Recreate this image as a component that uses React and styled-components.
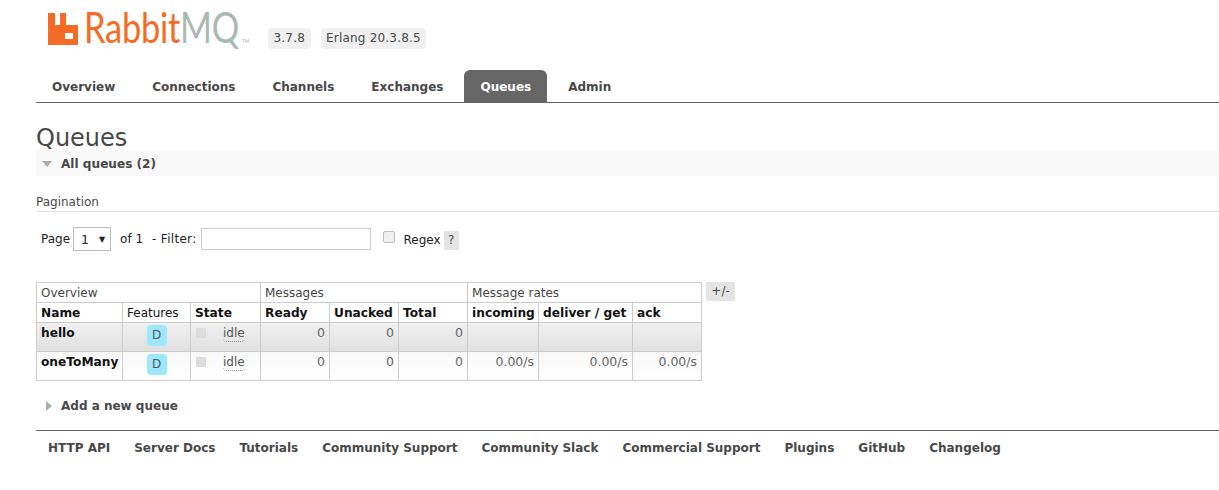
import styled, { createGlobalStyle } from "styled-components";

const GlobalStyle = createGlobalStyle`
  html, body {
    margin: 0;
    padding: 0;
    background: #fff;
    color: #484848;
    font-family: "DejaVu Sans", Verdana, sans-serif;
    font-size: 12px;
  }
`;

const tabs = ["Overview", "Connections", "Channels", "Exchanges", "Queues", "Admin"];
const footerLinks = [
  "HTTP API",
  "Server Docs",
  "Tutorials",
  "Community Support",
  "Community Slack",
  "Commercial Support",
  "Plugins",
  "GitHub",
  "Changelog",
];
const queues = [
  { name: "hello", ready: 0, unacked: 0, total: 0, rates: ["", "", ""], dark: true },
  { name: "oneToMany", ready: 0, unacked: 0, total: 0, rates: ["0.00/s", "0.00/s", "0.00/s"] },
];
const widths = [86, 68, 70, 69, 69, 69, 71, 94, 69];

function LogoMark() {
  return (
    <svg width="30" height="32" viewBox="0 0 30 32">
      <path
        fill="#f46b25"
        fillRule="evenodd"
        d="M0 0h7v12h5V0h6v12h12v20H0z M17 20h8v6h-8z"
      />
    </svg>
  );
}

export default function App() {
  return (
    <Page>
      <GlobalStyle />
      <Header>
        <LogoMark />
        <LogoText>
          Rabbit<LogoGrey>MQ</LogoGrey>
        </LogoText>
        <Tm>TM</Tm>
        <Badges>
          <Badge>3.7.8</Badge>
          <Badge>Erlang 20.3.8.5</Badge>
        </Badges>
      </Header>

      <Nav>
        {tabs.map((t) => (
          <Tab key={t} $active={t === "Queues"}>
            {t}
          </Tab>
        ))}
      </Nav>

      <Title>Queues</Title>
      <SectionBar>
        <ArrowDown />
        All queues (2)
      </SectionBar>

      <PaginationTitle>Pagination</PaginationTitle>
      <FilterRow>
        <span>Page</span>
        <PageSelect>
          1<SelectCaret>▼</SelectCaret>
        </PageSelect>
        <OfText>of 1</OfText>
        <FilterLabel>- Filter:</FilterLabel>
        <FilterInput type="text" />
        <Check />
        <RegexLabel>Regex</RegexLabel>
        <Help>?</Help>
      </FilterRow>

      <TableRow>
        <Table>
          <colgroup>
            {widths.map((w, i) => (
              <col key={i} style={{ width: w }} />
            ))}
          </colgroup>
          <thead>
            <tr>
              <GroupHead colSpan={3}>Overview</GroupHead>
              <GroupHead colSpan={3}>Messages</GroupHead>
              <GroupHead colSpan={3}>Message rates</GroupHead>
            </tr>
            <tr>
              <Head>Name</Head>
              <Head $light>Features</Head>
              <Head>State</Head>
              <Head>Ready</Head>
              <Head>Unacked</Head>
              <Head>Total</Head>
              <Head>incoming</Head>
              <Head>deliver / get</Head>
              <Head>ack</Head>
            </tr>
          </thead>
          <tbody>
            {queues.map((q) => (
              <Row key={q.name} $dark={q.dark}>
                <NameCell>{q.name}</NameCell>
                <FeatureCell>
                  <FeatureTag>D</FeatureTag>
                </FeatureCell>
                <StateCell>
                  <StateDot />
                  <Idle>idle</Idle>
                </StateCell>
                <NumCell>{q.ready}</NumCell>
                <NumCell>{q.unacked}</NumCell>
                <NumCell>{q.total}</NumCell>
                {q.rates.map((r, i) => (
                  <NumCell key={i}>{r}</NumCell>
                ))}
              </Row>
            ))}
          </tbody>
        </Table>
        <PlusMinus>+/-</PlusMinus>
      </TableRow>

      <AddQueue>
        <ArrowRight />
        Add a new queue
      </AddQueue>

      <Footer>
        {footerLinks.map((l) => (
          <FooterLink key={l}>{l}</FooterLink>
        ))}
      </Footer>
    </Page>
  );
}

const Page = styled.div`
  width: 1219px;
  height: 490px;
  overflow: hidden;
  box-sizing: border-box;
  padding-left: 36px;
`;

const Header = styled.div`
  display: flex;
  align-items: flex-start;
  height: 70px;
  box-sizing: border-box;
  padding: 13px 0 0 12px;
`;

const LogoText = styled.div`
  width: 157px;
  margin: -4px 0 0 6px;
  font-family: Lato, sans-serif;
  font-weight: 400;
  font-size: 43px;
  line-height: 36px;
  white-space: nowrap;
  color: #f46b25;
  letter-spacing: -0.3px;
  transform: scaleX(0.8);
  transform-origin: left center;
`;

const LogoGrey = styled.span`
  color: #a9b9b3;
`;

const Tm = styled.span`
  width: 8px;
  font-size: 5px;
  color: #a9b9b3;
  margin: 25px 0 0 1px;
`;

const Badges = styled.div`
  display: flex;
  gap: 10px;
  margin: 15px 0 0 18px;
`;

const Badge = styled.div`
  background: #f0f0f0;
  border-radius: 4px;
  padding: 0 5.500px;
  height: 21px;
  line-height: 21px;
  font-size: 12px;
  letter-spacing: 0.2px;
  color: #484848;
`;

const Nav = styled.div`
  display: flex;
  align-items: stretch;
  height: 32px;
  border-bottom: 1px solid #666;
`;

const Tab = styled.div`
  padding: 0 16px;
  margin-right: 5px;
  line-height: 34px;
  font-size: 12px;
  font-weight: bold;
  color: ${(p) => (p.$active ? "#fff" : "#484848")};
  background: ${(p) => (p.$active ? "#666" : "transparent")};
  border-radius: 6px 6px 0 0;
`;

const Title = styled.h1`
  height: 27px;
  margin: 21px 0 0;
  font-size: 24px;
  line-height: 28px;
  font-weight: normal;
  color: #484848;
`;

const SectionBar = styled.div`
  display: flex;
  align-items: center;
  height: 25px;
  background: #f8f8f8;
  font-size: 12.100px;
  font-weight: bold;
  color: #484848;
`;

const ArrowDown = styled.span`
  width: 0;
  height: 0;
  margin: 1px 9px 0 6px;
  border-left: 5.500px solid transparent;
  border-right: 5.500px solid transparent;
  border-top: 6px solid #aaa;
`;

const PaginationTitle = styled.div`
  margin-top: 19px;
  height: 16px;
  line-height: 15px;
  font-size: 12px;
  border-bottom: 1px solid #e0e0e0;
`;

const FilterRow = styled.div`
  display: flex;
  align-items: center;
  height: 26px;
  margin-top: 14px;
  padding-left: 5px;
  color: #222;
  font-size: 12px;
`;

const PageSelect = styled.div`
  display: flex;
  align-items: center;
  box-sizing: border-box;
  width: 38px;
  height: 24px;
  margin-left: 3px;
  padding-left: 7px;
  border: 1px solid #bbb;
  font-size: 12.500px;
`;

const SelectCaret = styled.span`
  font-size: 8px;
  margin-left: 10px;
`;

const OfText = styled.span`
  margin: -1px 0 0 9px;
`;

const FilterLabel = styled.span`
  margin: -1px 0 0 9px;
  letter-spacing: 0.3px;
`;

const FilterInput = styled.input`
  box-sizing: border-box;
  width: 170px;
  height: 22px;
  margin: 0 0 0 5px;
  padding: 0;
  border: 1px solid #ccc;
`;

const Check = styled.span`
  box-sizing: border-box;
  width: 12px;
  height: 12px;
  margin: -4px 0 0 12px;
  border: 1px solid #bbb;
  border-radius: 2px;
  background: #f0f0f0;
`;

const RegexLabel = styled.span`
  margin: 2px 0 0 8px;
`;

const Help = styled.span`
  box-sizing: border-box;
  width: 15px;
  height: 19px;
  margin: 2px 0 0 3px;
  line-height: 19px;
  text-align: center;
  background: #e4e4e4;
  color: #484848;
`;

const TableRow = styled.div`
  display: flex;
  align-items: flex-start;
  margin-top: 30px;
`;

const Table = styled.table`
  border-collapse: collapse;
  table-layout: fixed;
  width: 665px;
  box-sizing: border-box;
  font-size: 12px;
  border: 1px solid #ccc;
`;

const GroupHead = styled.th`
  height: 19px;
  padding: 0 4px;
  border: 1px solid #ccc;
  text-align: left;
  font-weight: normal;
  color: #444;
`;

const Head = styled.th`
  height: 19px;
  padding: 0 4px;
  border: 1px solid #ccc;
  text-align: left;
  white-space: nowrap;
  font-size: ${(p) => (p.$light ? "12px" : "12.200px")};
  font-weight: ${(p) => (p.$light ? "normal" : "bold")};
  color: #111;
`;

const Row = styled.tr`
  height: 28px;
  background: ${(p) =>
    p.$dark
      ? "linear-gradient(#f0f0f0, #e0e0e0)"
      : "linear-gradient(#f8f8f8, #fff)"};
`;

const Cell = styled.td`
  padding: 3px 4px 0;
  height: 25px;
  border: 1px solid #ccc;
  vertical-align: top;
  box-sizing: content-box;
`;

const NameCell = styled(Cell)`
  font-weight: bold;
  font-size: 12.200px;
  line-height: 14px;
  color: #111;
`;

const FeatureCell = styled(Cell)`
  padding-top: 2px;
  height: 26px;
  text-align: center;
`;

const FeatureTag = styled.span`
  display: inline-block;
  width: 20px;
  height: 21px;
  line-height: 21px;
  border-radius: 4px;
  background: #9ee8ff;
  color: #555;
  text-align: center;
`;

const StateCell = styled(Cell)`
  color: #666;
`;

const StateDot = styled.span`
  display: inline-block;
  width: 10px;
  height: 10px;
  margin: 2px 17px 0 1px;
  background: #ddd;
  vertical-align: top;
`;

const Idle = styled.span`
  border-bottom: 1px dotted #888;
  border-radius: 0 0 4px 4px;
  padding-bottom: 1px;
  color: #555;
`;

const NumCell = styled(Cell)`
  text-align: right;
  color: #666;
  font-size: 12.500px;
  line-height: 14px;
`;

const PlusMinus = styled.div`
  width: 29px;
  height: 19px;
  margin-left: 4px;
  line-height: 19px;
  text-align: center;
  background: #e4e4e4;
  color: #484848;
`;

const AddQueue = styled.div`
  display: flex;
  align-items: center;
  height: 18px;
  margin-top: 16px;
  font-size: 12px;
  font-weight: bold;
  color: #484848;
`;

const ArrowRight = styled.span`
  width: 0;
  height: 0;
  margin: -1px 9px 0 10px;
  border-top: 5.500px solid transparent;
  border-bottom: 5.500px solid transparent;
  border-left: 6px solid #aaa;
`;

const Footer = styled.div`
  display: flex;
  gap: 24px;
  margin-top: 15px;
  padding: 10px 0 0 12px;
  border-top: 1px solid #666;
  font-size: 12px;
  font-weight: bold;
  line-height: 15px;
`;

const FooterLink = styled.span`
  color: #484848;
`;
